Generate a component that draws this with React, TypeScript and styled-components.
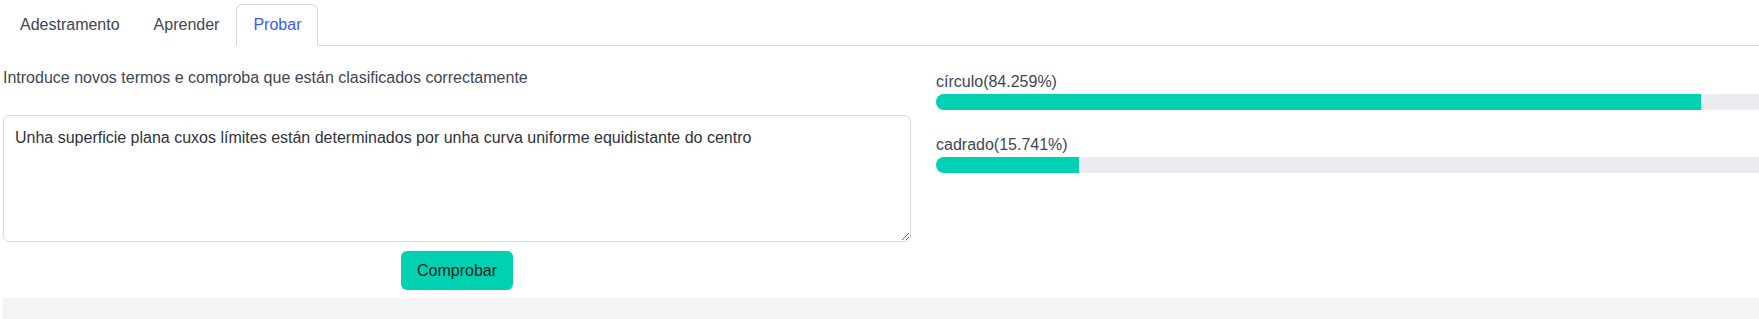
import React from "react";
import styled, { createGlobalStyle } from "styled-components";

const Global = createGlobalStyle`
  html, body {
    margin: 0;
    padding: 0;
    background: #ffffff;
    overflow: hidden;
  }
  body {
    font-family: "Liberation Sans", Arial, sans-serif;
    font-size: 16px;
    color: #404654;
  }
  * { box-sizing: border-box; }
`;

const Page = styled.div`
  width: 1759px;
  overflow: hidden;
  padding: 4px 0 0 3px;
`;

const Inner = styled.div`
  width: 1841px;
`;

const Tabs = styled.ul`
  display: flex;
  list-style: none;
  margin: 0;
  padding: 0;
  border-bottom: 1px solid #d6d9e0;
`;

const Tab = styled.li<{ $active?: boolean }>`
  margin-bottom: -1px;
  padding: 8px 16px;
  line-height: 24px;
  font-size: 16px;
  border: 1px solid ${(p) => (p.$active ? "#d6d9e0" : "transparent")};
  border-bottom-color: ${(p) => (p.$active ? "#ffffff" : "transparent")};
  border-radius: 6px 6px 0 0;
  background: #ffffff;
  color: ${(p) => (p.$active ? "#4258ff" : "#404654")};
  cursor: pointer;
`;

const Columns = styled.div`
  display: flex;
  gap: 25px;
  padding-top: 20px;
`;

const LeftColumn = styled.div`
  width: 908px;
  display: flex;
  flex-direction: column;
`;

const RightColumn = styled.div`
  width: 908px;
  padding-top: 4px;
`;

const Instruction = styled.p`
  margin: 0;
  line-height: 24px;
  font-size: 16px;
`;

const TextArea = styled.textarea`
  margin-top: 25px;
  width: 100%;
  height: 127px;
  padding: 10px 11px;
  font-family: "Liberation Sans", Arial, sans-serif;
  font-size: 16px;
  line-height: 24px;
  color: #2e333d;
  border: 1px solid #d6d9e0;
  border-radius: 6px;
  box-shadow: inset 0 1px 2px rgba(10, 10, 10, 0.04);
  outline: none;
  resize: vertical;
  display: block;
`;

const ButtonRow = styled.div`
  display: flex;
  justify-content: center;
  margin-top: 9px;
`;

const PrimaryButton = styled.button`
  height: 39px;
  padding: 0 15px;
  font-family: "Liberation Sans", Arial, sans-serif;
  font-size: 16px;
  color: #0d1f1c;
  background: #00d1b2;
  border: 1px solid transparent;
  border-radius: 6px;
  cursor: pointer;
`;

const ResultLabel = styled.div`
  line-height: 24px;
  font-size: 16px;
`;

const Track = styled.div`
  height: 16px;
  border-radius: 9999px;
  background: #ebecf0;
  overflow: hidden;
  margin-bottom: 23px;
`;

const Fill = styled.div`
  height: 100%;
  background: #00d1b2;
`;

const Footer = styled.div`
  margin-top: 8px;
  height: 21px;
  background: #f3f4f6;
`;

const results = [
  { label: "círculo", value: 84.259 },
  { label: "cadrado", value: 15.741 },
];

export default function App() {
  return (
    <>
      <Global />
      <Page>
        <Inner>
          <Tabs>
            <Tab>Adestramento</Tab>
            <Tab>Aprender</Tab>
            <Tab $active>Probar</Tab>
          </Tabs>
          <Columns>
            <LeftColumn>
              <Instruction>
                Introduce novos termos e comproba que están clasificados correctamente
              </Instruction>
              <TextArea
                defaultValue="Unha superficie plana cuxos límites están determinados por unha curva uniforme equidistante do centro"
              />
              <ButtonRow>
                <PrimaryButton>Comprobar</PrimaryButton>
              </ButtonRow>
            </LeftColumn>
            <RightColumn>
              {results.map((r) => (
                <div key={r.label}>
                  <ResultLabel>
                    {r.label}({r.value}%)
                  </ResultLabel>
                  <Track>
                    <Fill style={{ width: `${r.value}%` }} />
                  </Track>
                </div>
              ))}
            </RightColumn>
          </Columns>
          <Footer />
        </Inner>
      </Page>
    </>
  );
}
